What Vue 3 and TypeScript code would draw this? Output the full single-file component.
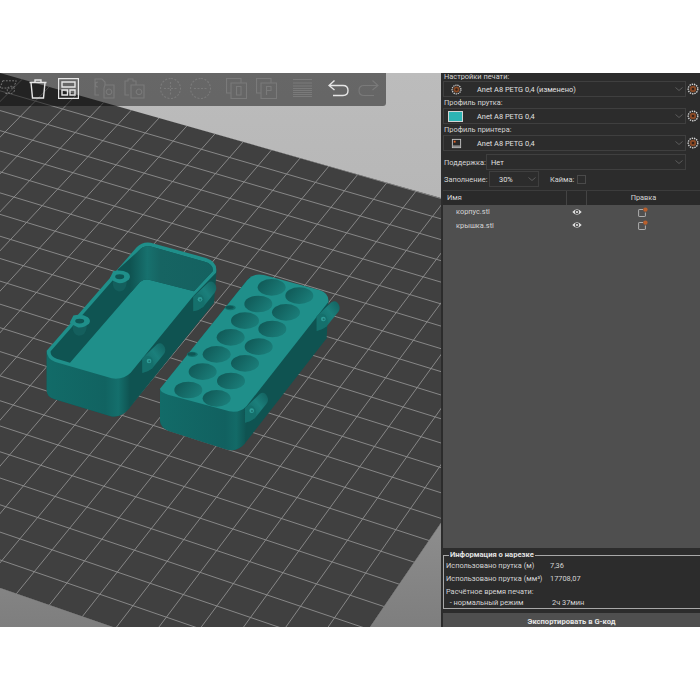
<template>
  <div class="page">
    <div class="frame">
      <div class="viewport">
        <svg class="scene" viewBox="0 73 441 554" width="441" height="554">
          <defs>
            <linearGradient id="bg" x1="0" y1="73" x2="0" y2="627" gradientUnits="userSpaceOnUse">
              <stop offset="0" stop-color="#bcbcbc" />
              <stop offset="0.35" stop-color="#b4b4b4" />
              <stop offset="1" stop-color="#7e7e7e" />
            </linearGradient>
            <clipPath id="plateClip"><polygon :points="platePoints" /></clipPath>
            <linearGradient id="frontSide" x1="50" y1="0" x2="300" y2="0" gradientUnits="userSpaceOnUse">
              <stop offset="0" stop-color="#126b68" />
              <stop offset="0.7" stop-color="#116361" />
              <stop offset="0.86" stop-color="#146f6c" />
              <stop offset="1" stop-color="#0f5351" />
            </linearGradient>
            <linearGradient id="frontSide2" x1="390" y1="0" x2="650" y2="0" gradientUnits="userSpaceOnUse">
              <stop offset="0" stop-color="#126b68" />
              <stop offset="0.75" stop-color="#116160" />
              <stop offset="0.88" stop-color="#136a67" />
              <stop offset="1" stop-color="#0f5351" />
            </linearGradient>
            <linearGradient id="inner" x1="300" y1="0" x2="560" y2="0" gradientUnits="userSpaceOnUse">
              <stop offset="0" stop-color="#0f5351" />
              <stop offset="0.2" stop-color="#17716e" />
              <stop offset="0.35" stop-color="#166462" />
              <stop offset="1" stop-color="#146160" />
            </linearGradient>
            <linearGradient id="hole" x1="0" y1="0" x2="1" y2="0.5">
              <stop offset="0" stop-color="#0f5553" />
              <stop offset="1" stop-color="#1a7b77" />
            </linearGradient>
            <linearGradient id="tube" x1="0" y1="1" x2="1" y2="0">
              <stop offset="0" stop-color="#11605e" />
              <stop offset="0.6" stop-color="#1b7f7b" />
              <stop offset="1" stop-color="#125f5d" />
            </linearGradient>
          </defs>

          <rect x="0" y="73" width="441" height="554" fill="url(#bg)" />
          <polygon :points="platePoints" fill="#404040" />
          <g clip-path="url(#plateClip)" stroke="#8e8e8e" stroke-width="0.9">
            <line v-for="l in gridLines" :key="l.id" :x1="l.x1" :y1="l.y1" :x2="l.x2" :y2="l.y2" />
          </g>

          <!-- model, drawn in 3x crop coordinates -->
          <g transform="translate(30 230) scale(0.33333)">
            <!-- open box -->
            <path
              d="M50,365 L50,480 Q50,500 72,507 L240,558 Q272,566 298,535 L552,218 L560,120 L340,40 Z"
              fill="#0f5351"
            />
            <path
              d="M50,365 L50,480 Q50,500 72,507 L240,558 Q272,566 298,535 L300,420 Z"
              fill="url(#frontSide)"
            />
            <path
              d="M50,362 L320,52 Q337,34 362,38 L528,84 Q564,95 558,128 L490,198 L302,428 Q280,450 245,445 L76,396 Q50,386 50,362 Z"
              fill="#1f8f8a"
            />
            <path
              d="M62,364 L326,62 Q340,46 360,49 L524,95 Q552,103 548,124 L492,184 L360,150 Q344,146 330,156 L120,398 L80,386 Q60,378 62,364 Z"
              fill="#0f5452"
            />
            <path
              d="M326,62 Q340,46 360,49 L524,95 Q552,103 548,124 L492,184 L360,150 Q344,146 330,156 L304,186 L262,120 Z"
              fill="url(#inner)"
            />
            <g v-for="b in bosses" :key="b.x" :transform="`translate(${b.x} ${b.y}) scale(0.9)`">
              <path d="M-24,12 Q-26,42 -4,46 Q18,46 22,20 L22,8 Z" fill="#145f5d" />
              <path d="M-22,-22 Q6,-28 26,-16 Q38,-6 30,6 Q14,20 -6,18 Q-22,14 -34,2 Z" fill="#1f8f8a" />
              <ellipse cx="-1" cy="-3" rx="15" ry="8" fill="#0f5654" />
            </g>

            <!-- lid with holes -->
            <path
              d="M390,478 L390,572 Q392,592 415,602 L588,658 Q622,668 645,640 L890,325 L896,210 L660,140 Z"
              fill="#0f5351"
            />
            <path
              d="M390,478 L390,572 Q392,592 415,602 L588,658 Q622,668 645,640 L650,530 Z"
              fill="url(#frontSide2)"
            />
            <path
              d="M390,476 L652,150 Q672,128 702,135 L868,180 Q898,190 895,216 L650,528 Q630,550 598,544 L414,494 Q390,486 390,476 Z"
              fill="#1f8f8a"
            />
            <ellipse
              v-for="h in holes"
              :key="`${h.x}-${h.y}`"
              :cx="h.x"
              :cy="h.y"
              rx="42"
              ry="25"
              fill="url(#hole)"
            />
            <g v-for="s in screwHoles" :key="s.x">
              <ellipse :cx="s.x" :cy="s.y" rx="16" ry="8" fill="#14706c" />
              <ellipse :cx="s.x - 2" :cy="s.y - 1" rx="12" ry="5" fill="#0f5654" />
            </g>

            <g v-for="p in hinges" :key="p.x" :transform="`translate(${p.x} ${p.y})`">
              <path
                d="M-20,36 L-20,-8 L24,-50 Q38,-60 47,-42 Q52,-30 44,-20 L10,22 Q-2,32 -20,36 Z"
                fill="url(#tube)"
              />
              <path d="M-20,36 L-20,-8 Q-8,-20 6,-12 Q18,2 10,22 Q-2,32 -20,36 Z" fill="#15706c" />
              <circle cx="0" cy="0" r="7" fill="#2f9c97" />
              <circle cx="1" cy="1" r="3" fill="#1b6f6c" />
            </g>
          </g>
        </svg>

        <div class="toolbar">
          <svg
            v-for="icon in toolIcons"
            :key="icon.name"
            class="tool"
            :class="{ active: icon.active, sep: icon.sep, dashed: icon.dashed }"
            viewBox="0 0 21 21"
            width="21"
            height="21"
          >
            <path :d="icon.d" />
          </svg>
        </div>
      </div>

      <aside class="panel">
        <div class="settings">
          <template v-for="p in profiles" :key="p.label">
            <div class="label">{{ p.label }}</div>
            <div class="profile-row">
              <div class="combo">
                <span class="swatch">
                  <svg v-if="p.icon === 'gear'" class="mark" viewBox="0 0 12 12" width="11" height="11">
                    <circle cx="6" cy="6" r="4.8" fill="none" stroke="#c9c9c9" stroke-width="1.4" stroke-dasharray="1.4 0.9" />
                    <circle cx="6" cy="6" r="3.2" fill="#8a4a26" />
                    <circle cx="6" cy="6" r="1.3" fill="#33221a" />
                  </svg>
                  <span v-else-if="p.icon === 'color'" class="color-box"></span>
                  <svg v-else class="mark" viewBox="0 0 12 12" width="11" height="11">
                    <rect x="1.5" y="1.5" width="9" height="9" fill="#2a2a2a" stroke="#c4c4c4" stroke-width="1" />
                    <rect x="2" y="8" width="8" height="2" fill="#8c8c8c" />
                    <rect x="3" y="3" width="2" height="2" fill="#e8662a" />
                  </svg>
                </span>
                <span class="combo-text">{{ p.value }}</span>
                <svg class="chev" viewBox="0 0 8 4" width="8" height="4"><path d="M0.5 0.5 L4 3.5 L7.5 0.5" /></svg>
              </div>
              <svg class="gear" viewBox="0 0 12 12" width="12" height="12">
                <circle cx="6" cy="6" r="4.8" fill="none" stroke="#d2d2d2" stroke-width="1.4" stroke-dasharray="1.4 0.9" />
                <circle cx="6" cy="6" r="3.2" fill="#8a4a26" />
                <circle cx="6" cy="6" r="1.3" fill="#33221a" />
              </svg>
            </div>
          </template>

          <div class="option-row support">
            <span class="opt-label">Поддержка:</span>
            <div class="combo plain grow">
              <span class="combo-text">Нет</span>
              <svg class="chev" viewBox="0 0 8 4" width="8" height="4"><path d="M0.5 0.5 L4 3.5 L7.5 0.5" /></svg>
            </div>
          </div>
          <div class="option-row fill">
            <span class="opt-label">Заполнение:</span>
            <div class="combo plain small">
              <span class="combo-text">30%</span>
              <svg class="chev" viewBox="0 0 8 4" width="8" height="4"><path d="M0.5 0.5 L4 3.5 L7.5 0.5" /></svg>
            </div>
            <span class="brim">Кайма:</span>
            <span class="checkbox"></span>
          </div>
        </div>

        <div class="table-head">
          <div class="col-name">Имя</div>
          <div class="col-eye"></div>
          <div class="col-edit">Правка</div>
        </div>
        <div class="list">
          <div v-for="f in files" :key="f" class="file-row">
            <span class="file-name">{{ f }}</span>
            <svg class="eye" viewBox="0 0 10 8" width="10" height="8">
              <path d="M0.3 4 Q5 -1.4 9.7 4 Q5 9.4 0.3 4 Z" fill="#e2e2e2" />
              <circle cx="5" cy="4" r="2.2" fill="#505050" />
              <circle cx="5" cy="4" r="1.1" fill="#e2e2e2" />
            </svg>
            <svg class="edit" viewBox="0 0 10 10" width="10" height="10">
              <path d="M5 2.5 H1.2 Q0.6 2.5 0.6 3.1 V9 Q0.6 9.5 1.2 9.5 H6.8 Q7.4 9.5 7.4 9 V5.5" fill="none" stroke="#b8b8b8" stroke-width="0.9" />
              <circle cx="7.4" cy="2.6" r="2.2" fill="#b95f2c" />
            </svg>
          </div>
        </div>

        <div class="info">
          <fieldset class="info-box">
            <legend>Информация о нарезке</legend>
            <div class="info-row"><span class="info-key">Использовано прутка (м)</span><span>7,36</span></div>
            <div class="info-row second"><span class="info-key">Использовано прутка (мм³)</span><span>17708,07</span></div>
            <div class="info-line">Расчётное время печати:</div>
            <div class="info-row mode"><span class="info-key">&nbsp;&nbsp;- нормальный режим</span><span class="time">2ч 37мин</span></div>
          </fieldset>
        </div>
        <div class="export">Экспортировать в G-код</div>
      </aside>
    </div>
  </div>
</template>

<script setup lang="ts">
type Pt = [number, number]

interface ToolIcon {
  name: string
  d: string
  active?: boolean
  sep?: boolean
  dashed?: boolean
}

// crossings of the bed grid: [column, row, screen x, screen y]
const gridSamples: number[][] = [
  [0, 0, 60, 148.3], [3, 0, 144, 173], [6, 0, 230.7, 198.3], [9, 0, 317.3, 224.3], [12, 0, 405, 251],
  [6, -2, 259.3, 165], [4, 2, 143.3, 215], [0, 2, 29.3, 181], [10, 2, 317.7, 267.3], [13, 2, 410, 294],
  [12, 5, 337.3, 340], [15, 5, 431.7, 369], [13, 8, 325, 407.3], [16, 8, 421.7, 436.7],
  [13, 10, 295, 445], [17, 10, 425, 488], [12, 13, 216.7, 497], [16, 13, 347.7, 540],
  [12, 17, 150, 583.3], [8, 17, 20, 539],
]

// least squares fit of the projective map through those crossings
function fitHomography(samples: number[][]) {
  const ata = Array.from({ length: 8 }, () => new Array(9).fill(0) as number[])
  const add = (row: number[], b: number) => {
    for (let r = 0; r < 8; r++) {
      for (let c = 0; c < 8; c++) ata[r][c] += row[r] * row[c]
      ata[r][8] += row[r] * b
    }
  }
  for (const [x, y, u, v] of samples) {
    add([x, y, 1, 0, 0, 0, -u * x, -u * y], u)
    add([0, 0, 0, x, y, 1, -v * x, -v * y], v)
  }
  for (let c = 0; c < 8; c++) {
    let best = c
    for (let r = c + 1; r < 8; r++) if (Math.abs(ata[r][c]) > Math.abs(ata[best][c])) best = r
    const tmp = ata[c]
    ata[c] = ata[best]
    ata[best] = tmp
    for (let r = 0; r < 8; r++) {
      if (r === c) continue
      const f = ata[r][c] / ata[c][c]
      for (let s = c; s < 9; s++) ata[r][s] -= f * ata[c][s]
    }
  }
  const h = ata.map((row, i) => row[8] / row[i])
  return (x: number, y: number): Pt => {
    const w = h[6] * x + h[7] * y + 1
    return [(h[0] * x + h[1] * y + h[2]) / w, (h[3] * x + h[4] * y + h[5]) / w]
  }
}

const toScreen = fitHomography(gridSamples)

const gridLines: { id: string; x1: number; y1: number; x2: number; y2: number }[] = []
for (let i = -14; i <= 22; i++) {
  const [x1, y1] = toScreen(i, -4)
  const [x2, y2] = toScreen(i, 26)
  gridLines.push({ id: `i${i}`, x1, y1, x2, y2 })
}
for (let j = -3; j <= 24; j++) {
  const [x1, y1] = toScreen(-14, j)
  const [x2, y2] = toScreen(22, j)
  gridLines.push({ id: `j${j}`, x1, y1, x2, y2 })
}

const platePoints = '0,73 441,198 441,523 370,627 113,627 0,588'

const bosses = [
  { x: 270, y: 143 },
  { x: 150, y: 276 },
]

const holes = [
  [725, 172], [685, 222], [645, 272], [602, 322], [560, 373], [518, 425], [475, 480],
  [808, 197], [768, 247], [727, 297], [686, 350], [645, 400], [603, 453], [560, 505],
].map(([x, y]) => ({ x, y }))

const screwHoles = [
  { x: 601, y: 233 },
  { x: 487, y: 373 },
]

const hinges = [
  { x: 510, y: 208 },
  { x: 357, y: 393 },
  { x: 880, y: 267 },
  { x: 665, y: 542 },
]

const toolIcons: ToolIcon[] = [
  { name: 'cut', dashed: true, d: 'M3 2 H18 L15 10 H0 Z M12 16 a4 4 0 1 0 -0.01 0 M6 16 H10' },
  { name: 'trash', active: true, d: 'M1.5 4.5 H18.5 M7 4.5 V2 H13 V4.5 M3 4.5 L4.5 20 H15.5 L17 4.5' },
  { name: 'layout', active: true, d: 'M0.5 0.5 H20.5 V20.5 H0.5 Z M4 4 H17 V9 H4 Z M4 12 H9.5 V17 H4 Z M12 12 H17 V17 H12 Z' },
  { name: 'copy', d: 'M5 17 H1 V1 H8 L11 4 V7 M4 4 a2.5 2.5 0 0 0 0 5 M11 7 H20 V20 H10 V10 Z M15 11 a2.8 2.8 0 1 0 0.01 0', sep: true },
  { name: 'paste', d: 'M5 17 H1 V3 H4 V1 H9 V3 H12 V7 M10 7 H20 V20 H7 V7 Z M15 11 a2.8 2.8 0 1 0 0.01 0' },
  { name: 'add', dashed: true, d: 'M10.5 0.5 a10 10 0 1 0 0.01 0 M10.5 4 V17 M4 10.5 H17', sep: true },
  { name: 'remove', dashed: true, d: 'M10.5 0.5 a10 10 0 1 0 0.01 0 M4 10.5 H17' },
  { name: 'copy-0', d: 'M5 15 H0.5 V0.5 H15 V5 M5 5 H20.5 V20.5 H5 Z M10.5 8.5 H15 V17 H10.5 Z', sep: true },
  { name: 'copy-p', d: 'M5 15 H0.5 V0.5 H15 V5 M5 5 H20.5 V20.5 H5 Z M10.5 17 V8.5 H15 V12.5 H10.5' },
  { name: 'layers', d: 'M1 1.5 H20 M1 5 H20 M1 8 H20 M1 10.5 H20 M1 12.5 H20 M1 14.5 H20 M1 16.5 H20 M1 18.5 H20', sep: true },
  { name: 'undo', active: true, d: 'M6.5 2.5 L1 7.5 L6.5 12 M1 7.5 H15 Q20 7.5 20 12.5 Q20 17.5 15 17.5 H5', sep: true },
  { name: 'redo', d: 'M14.5 2.5 L20 7.5 L14.5 12 M20 7.5 H6 Q1 7.5 1 12.5 Q1 17.5 6 17.5 H16' },
]

const profiles = [
  { label: 'Настройки печати:', value: 'Anet A8 PETG 0,4 (изменено)', icon: 'gear' },
  { label: 'Профиль прутка:', value: 'Anet A8 PETG 0,4', icon: 'color' },
  { label: 'Профиль принтера:', value: 'Anet A8 PETG 0,4', icon: 'printer' },
]

const files = ['корпус.stl', 'крышка.stl']
</script>

<style>
html,
body {
  background: #fff;
}
</style>

<style scoped>
.page {
  width: 700px;
  height: 700px;
  padding: 73px 0;
  box-sizing: border-box;
  background: #fff;
  overflow: hidden;
}

.frame {
  display: flex;
  height: 554px;
  overflow: hidden;
  font-family: Roboto, 'Noto Sans', sans-serif;
  font-size: 7.4px;
  color: #d4d4d4;
}

.viewport {
  position: relative;
  width: 441px;
  flex-shrink: 0;
}

.scene {
  display: block;
}

.toolbar {
  position: absolute;
  top: 0;
  left: 0;
  width: 386px;
  height: 33px;
  padding-top: 5px;
  box-sizing: border-box;
  display: flex;
  gap: 9px;
  background: rgba(0, 0, 0, 0.45);
  border-bottom-right-radius: 3px;
}

.tool {
  flex-shrink: 0;
  fill: none;
  stroke: #7a7a7a;
  stroke-width: 1.1;
}

.tool.active {
  stroke: #e6e6e6;
  stroke-width: 1.4;
}

.tool.dashed {
  stroke-dasharray: 2 1.5;
}

.tool:first-child {
  width: 19px;
}

.tool.sep {
  margin-left: 6px;
}

.panel {
  width: 259px;
  display: flex;
  flex-direction: column;
  background: #2c2c2c;
  padding-left: 2px;
  box-sizing: border-box;
}

.label {
  height: 11px;
  line-height: 11px;
  padding-left: 1px;
  white-space: nowrap;
}

.label:first-child {
  height: 8px;
  line-height: 8px;
}

.profile-row {
  display: flex;
  align-items: center;
  height: 16px;
}

.combo {
  flex: 1;
  height: 100%;
  display: flex;
  align-items: center;
  border: 1px solid #3f3f3f;
  box-sizing: border-box;
  padding-right: 2px;
  min-width: 0;
}

.swatch {
  width: 33px;
  display: flex;
  align-items: center;
  flex-shrink: 0;
}

.mark {
  margin-left: 7px;
}

.color-box {
  width: 15px;
  height: 11px;
  margin-left: 4px;
  background: #2db4b4;
  border: 1px solid #d4d4d4;
  box-sizing: border-box;
}

.combo-text {
  flex: 1;
  white-space: nowrap;
  color: #e0e0e0;
}

.chev {
  fill: none;
  stroke: #5c5c5c;
  stroke-width: 1;
  flex-shrink: 0;
}

.gear {
  flex-shrink: 0;
  margin: 0 1px;
}

.option-row {
  display: flex;
  align-items: center;
  height: 16px;
  margin-top: 1px;
  padding-left: 1px;
  white-space: nowrap;
}

.support {
  margin-top: 3px;
  padding-right: 14px;
}

.support .opt-label {
  width: 42px;
}

.fill .opt-label {
  width: 45px;
}

.opt-label {
  flex-shrink: 0;
}

.plain {
  height: 16px;
  padding-left: 4px;
}

.grow {
  flex: 1;
}

.small {
  flex: none;
  width: 50px;
  padding-left: 9px;
}

.brim {
  width: 27px;
  margin-left: 11px;
  flex-shrink: 0;
}

.checkbox {
  width: 9px;
  height: 9px;
  border: 1px solid #4a4a4a;
  box-sizing: border-box;
}

.table-head {
  display: flex;
  height: 15px;
  margin-top: 3px;
  line-height: 13px;
  background: #2a2a2a;
  border-top: 1px solid #3c3c3c;
  box-sizing: border-box;
}

.col-name {
  width: 124px;
  padding-left: 4px;
  box-sizing: border-box;
  border-right: 1px solid #444;
}

.col-eye {
  width: 19px;
  border-right: 1px solid #444;
}

.col-edit {
  flex: 1;
  text-align: center;
}

.list {
  flex: 1;
  background: #4f4f4f;
}

.file-row {
  display: flex;
  align-items: center;
  height: 13.5px;
}

.file-name {
  width: 129px;
  padding-left: 13px;
  box-sizing: border-box;
  flex-shrink: 0;
}

.eye {
  flex-shrink: 0;
}

.edit {
  flex-shrink: 0;
  margin-left: 56px;
}

.info {
  height: 65px;
  box-sizing: border-box;
  flex-shrink: 0;
}

.info-box {
  margin: 3px 0 0;
  padding: 0 0 0 2px;
  height: 58px;
  border: 1px solid #a8a8a8;
  border-right: none;
  box-sizing: border-box;
  min-width: 0;
}

legend {
  margin-left: 3px;
  padding: 0 1px;
  font-weight: 700;
  font-size: 7.6px;
  line-height: 8px;
  color: #e2e2e2;
}

.info-row {
  display: flex;
  height: 13px;
  align-items: center;
  white-space: nowrap;
}

.info-key {
  width: 104px;
  flex-shrink: 0;
}

.info-line {
  height: 10px;
  line-height: 10px;
  margin-top: 2px;
  white-space: nowrap;
}

.mode {
  height: 10px;
}

.time {
  margin-left: 2px;
}

.export {
  height: 14px;
  flex-shrink: 0;
  background: #4f4f4f;
  text-align: center;
  font-size: 7.6px;
  font-weight: 700;
  line-height: 18px;
  color: #e6e6e6;
  overflow: hidden;
}
</style>
